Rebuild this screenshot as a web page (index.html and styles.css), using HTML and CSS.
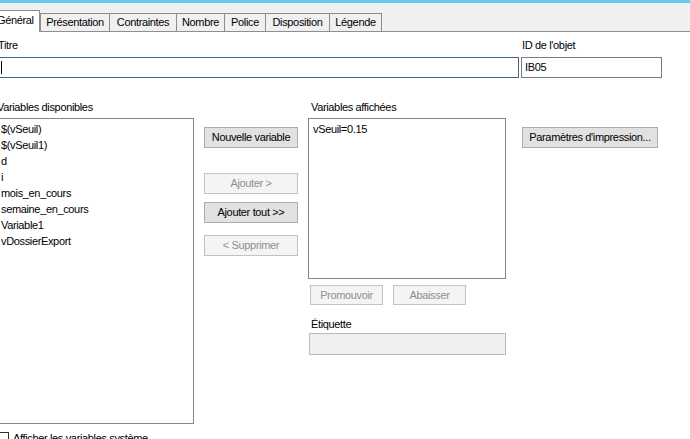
FILE: index.html
```html
<!DOCTYPE html>
<html lang="fr">
<head>
<meta charset="utf-8">
<title>Propriétés</title>
<link rel="stylesheet" href="styles.css">
</head>
<body>
<div class="chrome"></div>
<div class="tabbar">
  <div class="tab active">Général</div>
  <div class="tab t-pres">Présentation</div>
  <div class="tab t-cont">Contraintes</div>
  <div class="tab t-nomb">Nombre</div>
  <div class="tab t-pol">Police</div>
  <div class="tab t-disp">Disposition</div>
  <div class="tab t-leg last">Légende</div>
</div>
<div class="page">
  <div class="row-top">
    <div class="field title">
      <div class="lbl">Titre</div>
      <div class="input focus"><span class="caret"></span></div>
    </div>
    <div class="field objid">
      <div class="lbl">ID de l'objet</div>
      <div class="input">IB05</div>
    </div>
  </div>
  <div class="main">
    <div class="col-left">
      <div class="lbl">Variables disponibles</div>
      <ul class="list tall">
        <li>$(vSeuil)</li>
        <li>$(vSeuil1)</li>
        <li>d</li>
        <li>i</li>
        <li>mois_en_cours</li>
        <li>semaine_en_cours</li>
        <li>Variable1</li>
        <li>vDossierExport</li>
      </ul>
      <div class="check"><span class="box"></span>Afficher les variables système</div>
    </div>
    <div class="col-mid">
      <button class="btn b-new">Nouvelle variable</button>
      <button class="btn off b-add">Ajouter &gt;</button>
      <button class="btn b-all">Ajouter tout &gt;&gt;</button>
      <button class="btn off b-del">&lt; Supprimer</button>
    </div>
    <div class="col-right">
      <div class="lbl ind">Variables affichées</div>
      <ul class="list short">
        <li>vSeuil=0.15</li>
      </ul>
      <div class="order">
        <button class="btn off small">Promouvoir</button>
        <button class="btn off small">Abaisser</button>
      </div>
      <div class="lbl ind lbl-etq">Étiquette</div>
      <div class="input readonly"></div>
    </div>
    <div class="col-far">
      <button class="btn b-print">Paramètres d'impression...</button>
    </div>
  </div>
</div>
</body>
</html>
```

FILE: styles.css
```css
* { box-sizing: border-box; }
html, body { margin: 0; padding: 0; }
body {
  width: 690px;
  height: 439px;
  overflow: hidden;
  background: #ffffff;
  font-family: "Liberation Sans", Arial, sans-serif;
  font-size: 11px;
  letter-spacing: -0.35px;
  color: #000;
}
.chrome { height: 3px; background: #69c9ea; }
.tabbar {
  display: flex;
  align-items: flex-end;
  height: 29px;
  background: #f0f0f0;
  border-bottom: 1px solid #8c8f96;
}
.tab {
  height: 18px;
  line-height: 17px;
  border: 1px solid #8d8d8d;
  border-bottom: 0;
  border-right: 0;
  background: #f0f0f0;
  text-align: center;
  white-space: nowrap;
}
.t-pres { width: 69px; }
.t-cont { width: 67px; }
.t-nomb { width: 48px; }
.t-pol { width: 41px; }
.t-disp { width: 64px; }
.t-leg { width: 53px; }
.tab.last { border-right: 1px solid #8d8d8d; }
.tab.active {
  position: relative;
  z-index: 1;
  width: 49px;
  height: 22px;
  margin-bottom: -1px;
  margin-left: -9px;
  padding-left: 5px;
  text-align: left;
  line-height: 18px;
  background: #fff;
  border-right: 1px solid #8d8d8d;
}
.page { margin-left: -3px; }
.lbl { height: 13px; line-height: 13px; white-space: nowrap; }
.ind { padding-left: 3px; }
.row-top {
  display: flex;
  gap: 2px;
  padding-top: 7px;
}
.field .lbl { margin-bottom: 5px; padding-left: 1px; }
.title { width: 522px; }
.objid { width: 141px; }
.input {
  height: 21px;
  border: 1px solid #7a7a7a;
  line-height: 19px;
  padding-left: 3px;
  background: #fff;
}
.input.focus { border-color: #3e678e; position: relative; }
.caret {
  display: block;
  position: absolute;
  left: 3px;
  top: 3px;
  width: 1px;
  height: 13px;
  background: #000;
}
.main {
  display: grid;
  grid-template-columns: 197px 94px 198px 136px;
  column-gap: 10px;
  padding-top: 23px;
}
.col-far { margin-left: 6px; }
.list {
  list-style: none;
  margin: 4px 0 0 0;
  padding: 2px 0 0 3px;
  border: 1px solid #868686;
  background: #fff;
}
.list li { height: 16px; line-height: 16px; white-space: nowrap; }
.list.tall { height: 306px; }
.list.short { height: 161px; padding-left: 4px; }
.check {
  display: flex;
  align-items: flex-start;
  gap: 4px;
  margin-top: 8px;
  line-height: 13px;
  white-space: nowrap;
}
.check .box {
  width: 13px;
  height: 13px;
  border: 1px solid #333;
  margin-left: -1px;
  background: #fff;
}
.btn {
  display: block;
  width: 94px;
  height: 21px;
  padding: 0;
  font: inherit;
  letter-spacing: inherit;
  color: #000;
  background: #e1e1e1;
  border: 1px solid #adadad;
  line-height: 19px;
  text-align: center;
  white-space: nowrap;
}
.btn.off {
  background: #f4f4f4;
  border-color: #c2c2c2;
  color: #8f8f8f;
}
.b-new { margin-top: 26px; }
.b-add { margin-top: 25px; }
.b-all { margin-top: 8px; }
.b-del { margin-top: 12px; }
.b-print { width: 136px; margin-top: 26px; }
.order {
  display: flex;
  gap: 10px;
  margin: 6px 0 0 2px;
}
.btn.small { width: 73px; height: 20px; line-height: 18px; }
.lbl-etq { margin-top: 13px; margin-bottom: 2px; }
.input.readonly {
  margin-left: 1px;
  height: 22px;
  background: #f0f0f0;
  border-color: #bcbcbc;
}
```
